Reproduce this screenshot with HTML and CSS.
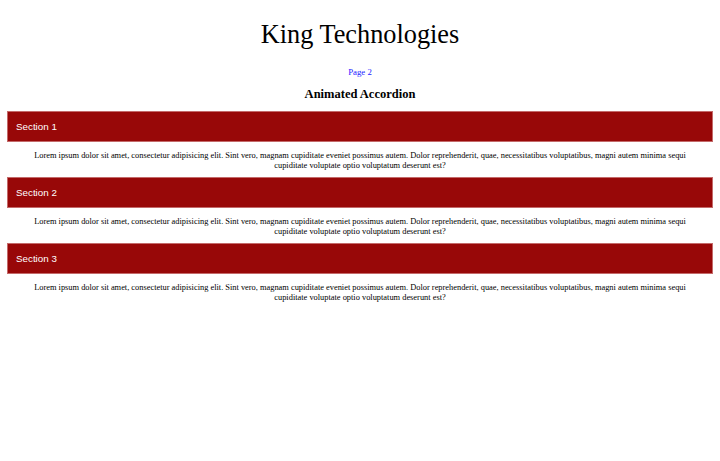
FILE: index.html
```html
<!DOCTYPE html>
<html>
<head>
<meta charset="utf-8">
<link rel="stylesheet" href="styles.css">
</head>
<body>
<h1 class="title">King Technologies</h1>
<div class="nav"><a href="#" class="nav-link">Page 2</a></div>
<h3 class="subtitle">Animated Accordion</h3>
<div class="accordion">
  <div class="item">
    <div class="header">Section 1</div>
    <p class="content">Lorem ipsum dolor sit amet, consectetur adipisicing elit. Sint vero, magnam cupiditate eveniet possimus autem. Dolor reprehenderit, quae, necessitatibus voluptatibus, magni autem minima sequi cupiditate voluptate optio voluptatum deserunt est?</p>
  </div>
  <div class="item">
    <div class="header">Section 2</div>
    <p class="content">Lorem ipsum dolor sit amet, consectetur adipisicing elit. Sint vero, magnam cupiditate eveniet possimus autem. Dolor reprehenderit, quae, necessitatibus voluptatibus, magni autem minima sequi cupiditate voluptate optio voluptatum deserunt est?</p>
  </div>
  <div class="item">
    <div class="header">Section 3</div>
    <p class="content">Lorem ipsum dolor sit amet, consectetur adipisicing elit. Sint vero, magnam cupiditate eveniet possimus autem. Dolor reprehenderit, quae, necessitatibus voluptatibus, magni autem minima sequi cupiditate voluptate optio voluptatum deserunt est?</p>
  </div>
</div>
</body>
</html>
```

FILE: styles.css
```css
html, body {
  background: #ffffff;
}
body {
  margin: 0;
  padding: 0 7px;
  font-family: "Liberation Serif", "Times New Roman", serif;
  color: #000;
}
.title {
  margin: 0;
  padding-top: 19px;
  font-size: 26.3px;
  font-weight: normal;
  line-height: 32px;
  text-align: center;
}
.nav {
  margin-top: 15px;
  text-align: center;
  font-size: 8.8px;
  line-height: 12px;
}
.nav-link {
  color: #2222ff;
  text-decoration: none;
}
.subtitle {
  margin: 8px 0 0;
  text-align: center;
  font-size: 12.5px;
  line-height: 16px;
  font-weight: bold;
}
.accordion {
  margin-top: 9px;
  display: flex;
  flex-direction: column;
}
.header {
  background: #980808;
  color: #ffffff;
  font-family: "Liberation Sans", Arial, sans-serif;
  font-size: 9.8px;
  height: 31px;
  line-height: 31px;
  padding-left: 9px;
  box-shadow: inset 0 0 0 1px #c46a6a;
}
.content {
  margin: 0;
  padding: 9px 20px 0;
  height: 26px;
  text-align: center;
  font-size: 8.4px;
  line-height: 10px;
}
```
